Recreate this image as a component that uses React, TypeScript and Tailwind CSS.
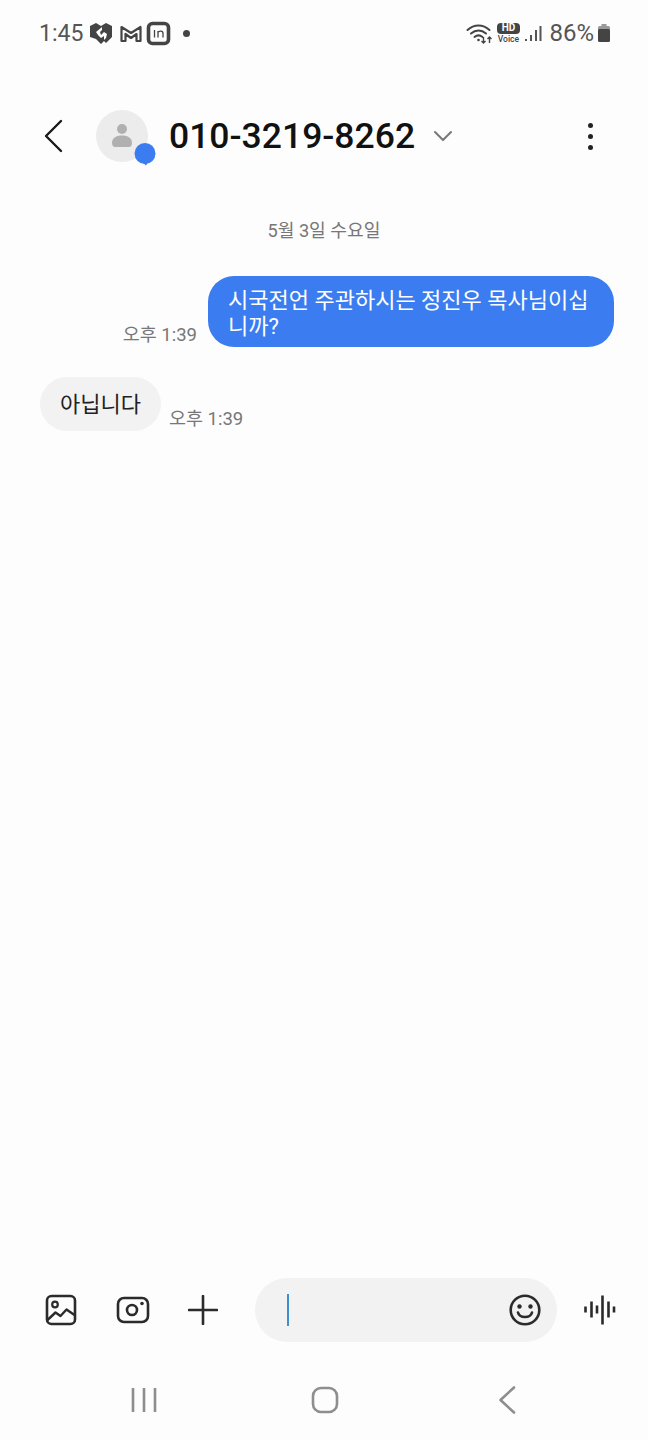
import React from "react";

const font = { fontFamily: 'Roboto, "Noto Sans CJK KR", sans-serif' };

function StatusBar() {
  return (
    <div className="flex h-[66px] items-center justify-between pl-[39px] pr-[37px] text-[#555555]">
      <div className="flex items-center">
        <span className="text-[23px] leading-none">1:45</span>
        <svg width="24" height="24" viewBox="0 0 24 24" className="ml-[6px]">
          <path d="M1 5l6-3 5 3 5-3 6 3v11l-6 6-2-2-3 3-5-5-6-2z" fill="#444" />
          <path d="M7 11l6-5v3l-2 2 1 3 3-3 3 2-1 4-2 2v-4l-3 2-3-3z" fill="#fff" />
        </svg>
        <svg width="24" height="24" viewBox="0 0 24 24" className="ml-[6px]">
          <path d="M2.500 20V6l9.500 6 9.500-6v14h-4v-7l-5.500 4-5.500-4v7z" fill="none" stroke="#444" strokeWidth="2.200" strokeLinejoin="round" />
        </svg>
        <svg width="25" height="25" viewBox="0 0 25 25" className="ml-[3px]">
          <rect x="2.500" y="2.500" width="20" height="20" rx="4" fill="none" stroke="#444" strokeWidth="3.600" />
          <path d="M8.500 9v7.500M12 16.500V10M12 11.500c1-2 5-2 5 .8v4.200" fill="none" stroke="#444" strokeWidth="1.300" />
        </svg>
        <span className="ml-[12px] h-[7px] w-[7px] rounded-full bg-[#444444]" />
      </div>
      <div className="flex items-center">
        <svg width="29" height="22" viewBox="0 0 28 22">
          <path d="M2 8c6.500-6 15.500-6 22 0M5.500 11.500c4.500-4 10.500-4 15 0M9 15c2.500-2 5.500-2 8 0" fill="none" stroke="#444" strokeWidth="2" strokeLinecap="round" />
          <circle cx="13" cy="18" r="1.300" fill="#444" />
          <path d="M18 15v6M16 19l2 2 2-2M24 21v-6M22 17l2-2 2 2" fill="none" stroke="#444" strokeWidth="1.400" />
        </svg>
        <div className="ml-[2px] flex w-[24px] flex-col items-center">
          <span className="flex h-[11px] w-[23px] items-center justify-center rounded-[4px] bg-[#444444] text-[10px] font-bold leading-none text-white">HD</span>
          <span className="mt-[1px] text-[8.500px] font-medium leading-none text-[#444444]">Voice</span>
        </div>
        <svg width="18" height="20" viewBox="0 0 18 20" className="ml-[4px]">
          <path d="M2 18v-2M7 18v-6M12 18V7M16.500 18V3" stroke="#555" strokeWidth="2" />
        </svg>
        <span className="ml-[7px] text-[24px] leading-none">86%</span>
        <svg width="14" height="20" viewBox="0 0 14 20" className="ml-[3px]">
          <path d="M4.500 1h5v2h-5z" fill="#999" />
          <rect x="1" y="3" width="12" height="5" rx="1.500" fill="#999" />
          <rect x="1" y="6" width="12" height="13" rx="1.500" fill="#444" />
        </svg>
      </div>
    </div>
  );
}

function Header() {
  return (
    <div className="mt-[17px] flex h-[106px] items-center pl-[43px] pr-[55px]">
      <svg width="20" height="34" viewBox="0 0 20 34">
        <path d="M18 2L3 17l15 15" fill="none" stroke="#1a1a1a" strokeWidth="2.400" strokeLinecap="round" strokeLinejoin="round" />
      </svg>
      <div className="relative ml-[33px] flex h-[52px] w-[52px] items-center justify-center rounded-full bg-[#ececec]">
        <svg width="22" height="26" viewBox="0 0 22 26">
          <circle cx="11" cy="6" r="5" fill="#b0b0b0" />
          <path d="M1 20c0-5 4-7.500 10-7.500S21 15 21 20c0 2-1 4-3 4H4c-2 0-3-2-3-4z" fill="#b0b0b0" />
        </svg>
        <svg width="24" height="24" viewBox="0 0 24 24" className="absolute left-[37px] top-[32px]">
          <circle cx="12" cy="11.500" r="10.500" fill="#3b7df0" />
          <path d="M9 20l4 3.500 2-3.500z" fill="#3b7df0" />
        </svg>
      </div>
      <span className="ml-[21px] mt-[2px] text-[35.500px] font-medium leading-none text-[#111111]">010-3219-8262</span>
      <svg width="20" height="12" viewBox="0 0 20 12" className="ml-[18px]">
        <path d="M2 2l8 8 8-8" fill="none" stroke="#777" strokeWidth="2" strokeLinecap="round" strokeLinejoin="round" />
      </svg>
      <div className="ml-auto flex flex-col gap-[6px]">
        <span className="h-[5px] w-[5px] rounded-full bg-[#222222]" />
        <span className="h-[5px] w-[5px] rounded-full bg-[#222222]" />
        <span className="h-[5px] w-[5px] rounded-full bg-[#222222]" />
      </div>
    </div>
  );
}

function Messages() {
  return (
    <div className="flex-1">
      <div className="mt-[30px] h-[24px] text-center text-[18.200px] leading-[24px] text-[#777777]">5월 3일 수요일</div>
      <div className="mt-[33px] flex items-end justify-end pr-[34px]">
        <span className="mr-[11px] text-[18.500px] leading-[24px] text-[#777777]">오후 1:39</span>
        <div className="h-[71px] w-[406px] rounded-[26px] bg-[#3b7df0] px-[20px] py-[12px] text-[22px] leading-[26px] text-white">
          시국전언 주관하시는 정진우 목사님이십<br />니까?
        </div>
      </div>
      <div className="mt-[30px] flex items-end pl-[40px]">
        <div className="h-[54px] rounded-[27px] bg-[#f2f2f2] px-[20px] text-[22px] leading-[56px] text-[#222222]">아닙니다</div>
        <span className="ml-[8px] text-[18.500px] leading-[24px] text-[#777777]">오후 1:39</span>
      </div>
    </div>
  );
}

function Composer() {
  return (
    <div className="flex h-[64px] items-center pl-[45px]">
      <svg width="32" height="32" viewBox="0 0 32 32">
        <rect x="2" y="2" width="28" height="28" rx="4.500" fill="none" stroke="#2b2b2b" strokeWidth="2.600" />
        <circle cx="10" cy="10.500" r="2.800" fill="none" stroke="#2b2b2b" strokeWidth="2.200" />
        <path d="M2.500 26l8-7.500 5 3.500 6-6.500 8 5.500" fill="none" stroke="#2b2b2b" strokeWidth="2.400" strokeLinejoin="round" />
      </svg>
      <svg width="34" height="28" viewBox="0 0 34 28" className="ml-[39px]">
        <rect x="2" y="2" width="30" height="24" rx="6" fill="none" stroke="#2b2b2b" strokeWidth="2.600" />
        <circle cx="16" cy="14" r="5" fill="none" stroke="#2b2b2b" strokeWidth="2.600" />
        <circle cx="26" cy="7.500" r="1.800" fill="#2b2b2b" />
      </svg>
      <svg width="30" height="30" viewBox="0 0 30 30" className="ml-[38px]">
        <path d="M15 1v28M1 15h28" stroke="#2b2b2b" strokeWidth="2.600" strokeLinecap="round" />
      </svg>
      <div className="ml-[37px] flex h-[64px] w-[302px] items-center rounded-[32px] bg-[#f2f2f2] pl-[32px] pr-[16px]">
        <span className="h-[32px] w-[2px] bg-[#3d8fd1]" />
        <svg width="32" height="32" viewBox="0 0 32 32" className="ml-auto">
          <circle cx="16" cy="16" r="14.300" fill="none" stroke="#2b2b2b" strokeWidth="2.600" />
          <circle cx="10.500" cy="12.500" r="2.200" fill="#2b2b2b" />
          <circle cx="21.500" cy="12.500" r="2.200" fill="#2b2b2b" />
          <path d="M9 18.500c1.500 6 12.500 6 14 0" fill="none" stroke="#2b2b2b" strokeWidth="2.600" strokeLinecap="round" />
        </svg>
      </div>
      <svg width="32" height="30" viewBox="0 0 32 30" className="ml-[27px]">
        <path d="M1.500 12v6M7.500 7v16M13 11v8M18.500 1v29M24.500 7v16M30 12v6" transform="translate(0 -0.500)" stroke="#2b2b2b" strokeWidth="2.600" />
      </svg>
    </div>
  );
}

function NavBar() {
  return (
    <div className="mb-[8px] mt-[30px] flex h-[60px] items-center pb-[4px]">
      <div className="flex w-[288px] justify-end pr-[131px]">
        <svg width="26" height="26" viewBox="0 0 26 26">
          <path d="M2 1v24M13 1v24M24 1v24" stroke="#8e8e8e" strokeWidth="2.600" />
        </svg>
      </div>
      <svg width="28" height="28" viewBox="0 0 28 28" className="ml-[23px]">
        <rect x="2" y="2" width="24" height="24" rx="8" fill="none" stroke="#8e8e8e" strokeWidth="2.600" />
      </svg>
      <svg width="18" height="28" viewBox="0 0 18 28" className="ml-[159px]">
        <path d="M16 1.500L2.500 14 16 26.500" fill="none" stroke="#8e8e8e" strokeWidth="2.600" strokeLinecap="round" strokeLinejoin="round" />
      </svg>
    </div>
  );
}

export default function App() {
  return (
    <div className="flex h-[1440px] w-[648px] flex-col overflow-hidden bg-[#fdfdfd]" style={font}>
      <StatusBar />
      <Header />
      <Messages />
      <Composer />
      <NavBar />
    </div>
  );
}
